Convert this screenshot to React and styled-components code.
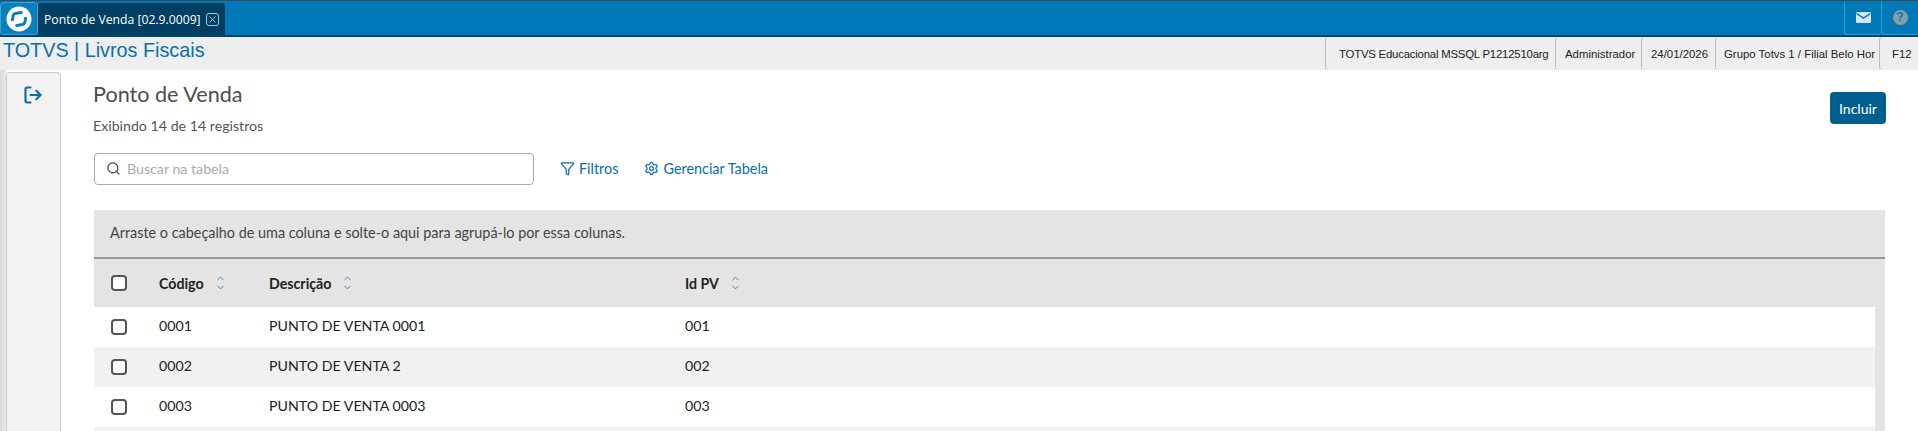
import React from "react";
import styled, { createGlobalStyle } from "styled-components";
import { Search, Filter, Settings, ChevronUp, ChevronDown, LogOut, X } from "lucide-react";

const Global = createGlobalStyle`
  html, body { margin: 0; padding: 0; background: #fff; }
  * { box-sizing: border-box; }
`;
const UI = `"Lato", "Open Sans", sans-serif`;
const Page = styled.div`
  width: 100%; height: 100vh; overflow: hidden; display: flex; flex-direction: column; font-family: ${UI}; background: #fff;
`;
const TopBar = styled.header`
  height: 37px; flex: none; display: flex; align-items: stretch; background: #0079b8;
  border-top: 1px solid #3a4a55; border-bottom: 2px solid #00466e;
`;
const LogoBtn = styled.div`
  width: 38px; margin-top: 1px; display: flex; align-items: center; justify-content: center;
  border: 1px solid #3fa0dc; border-radius: 4px; background: #0a7fbd;
`;
const Tab = styled.div`
  width: 187px; margin-top: 2px; display: flex; align-items: center; gap: 5px; padding-left: 6px; background: #003f63;
  border-radius: 3px 3px 0 0; color: #fff; font: 12.2px "Open Sans", sans-serif;
`;
const CloseBox = styled.span`
  width: 13px; height: 13px; border: 1px solid #b5c4ce; border-radius: 3px; display: flex; align-items: center; justify-content: center; color: #b5c4ce;
`;
const Spacer = styled.div`flex: 1;`;
const TopIcon = styled.div`
  width: 37px; display: flex; align-items: center; justify-content: center;
  border-left: 1px solid #2a9be0; border-bottom: 1px solid #2a9be0; border-radius: 0 0 3px 3px;
`;
const HelpDot = styled.span`
  width: 15px; height: 15px; border-radius: 50%; background: #8a9aa5; color: #0079b8; display: flex; align-items: center; justify-content: center;
  font: bold 12px/15px "Liberation Sans", Arial, sans-serif;
`;
const SubBar = styled.div`
  height: 33px; flex: none; display: flex; align-items: stretch; justify-content: space-between; background: #eee;
`;
const Brand = styled.div`
  padding-left: 3px; font: 19.8px/26px "Liberation Sans", Arial, sans-serif; color: #0a6ea8;
`;
const Status = styled.div`display: flex;`;
const StatusCell = styled.div`
  width: ${p => p.$w}px; padding-left: ${p => p.$pad}px; display: flex; align-items: center; white-space: nowrap; overflow: hidden;
  font: 11.4px "Liberation Sans", Arial, sans-serif; letter-spacing: ${p => p.$ls || 0}px; color: #222;
  border-left: 1px solid #bbb; border-radius: 4px 0 0 4px;
`;
const Body = styled.div`flex: none; height: 361px; display: flex;`;
const Side = styled.aside`
  width: 61px; flex: none; padding-left: 6px; padding-top: 2px;
  background: linear-gradient(90deg, #d8d8d8 0, #e8e8e8 6px, #fff 6px);
`;
const SideInner = styled.div`
  height: 100%; background: #f2f2f2; border: 1px solid #ccc; border-bottom: 0; border-radius: 4px 4px 0 0;
  display: flex; justify-content: center; padding-top: 12px; padding-right: 2px; color: #0a6ea8;
`;
const Main = styled.main`flex: 1; min-width: 0; padding: 0 33px; display: flex; flex-direction: column;`;
const Head = styled.div`flex: none; display: flex; justify-content: space-between; align-items: flex-start;`;
const Title = styled.h1`margin: 10px 0 0 -1px; font-size: 21.6px; line-height: 28px; font-weight: 400; color: #4d4d4d;`;
const Sub = styled.div`margin-top: 9px; margin-left: -1px; font-size: 14.2px; line-height: 18px; color: #555;`;
const Primary = styled.button`
  margin: 22px -1px 0 0; width: 56px; height: 32px; border: 0; border-radius: 4px; background: #005f8f; color: #fff; font: 14px ${UI}; padding: 0;
`;
const Tools = styled.div`flex: none; display: flex; align-items: center; height: 32px; margin-top: 18px;`;
const SearchBox = styled.div`
  width: 440px; height: 32px; margin-right: 26px; padding: 0 0 2px 11px; border: 1px solid #aaa; border-radius: 4px; display: flex; align-items: center; gap: 6px;
  color: #aaa; font-size: 14.2px;
  svg { color: #444; }
`;
const Link = styled.div`
  display: flex; align-items: center; gap: 4px; padding-bottom: 2px; color: #0a6ea8; font-size: 14.4px; margin-right: 26px;
`;
const GroupBar = styled.div`
  flex: none; margin-top: 25px; height: 49px; padding: 0 0 2px 16px; background: #e4e4e4; border-bottom: 2px solid #999; display: flex; align-items: center;
  font-size: 14.4px; color: #444;
`;
const Table = styled.div`flex: none; background: #e4e4e4; padding-right: 10px;`;
const Row = styled.div`
  display: grid; grid-template-columns: 65px 110px 416px 1fr; align-items: center; height: ${p => p.$h}px;
  background: ${p => p.$bg}; font-size: 14.2px; color: #222; font-weight: ${p => (p.$head ? 700 : 400)};
`;
const Check = styled.span`
  display: block; margin-left: 17px; width: 16px; height: 16px; border: 2px solid #555; border-radius: 4px; background: #fff;
`;
const Cell = styled.div`padding-bottom: 3px;`;
const HeadCell = styled.div`display: flex; align-items: center; gap: 11px;`;
const Sort = styled.span`
  display: flex; flex-direction: column; color: #3f7ea6; svg { display: block; margin: -1px 0; }
`;
const SortIcon = () => (
  <Sort><ChevronUp size={11} /><ChevronDown size={11} /></Sort>
);
const Logo = () => (
  <svg width="28" height="28" viewBox="0 0 28 28">
    <circle cx="14" cy="14" r="12.5" fill="#fff" />
    <path d="M7.2 16 L8.2 10.5 Q8.7 8.8 10.4 8.4 L17.5 7.2" stroke="#0a7fbd" strokeWidth="3" fill="none" />
    <path d="M20.8 12 L19.8 17.5 Q19.3 19.2 17.6 19.6 L10.5 20.8" stroke="#0a7fbd" strokeWidth="3" fill="none" />
  </svg>
);
const MailIcon = () => (
  <svg width="15" height="11" viewBox="0 0 15 11">
    <rect width="15" height="11" rx="1.2" fill="#d5e6f0" />
    <path d="M0.5 1.5 L7.5 6.2 L14.5 1.5" stroke="#0079b8" strokeWidth="1.4" fill="none" />
  </svg>
);
const rows = [
  ["0001", "PUNTO DE VENTA 0001", "001"],
  ["0002", "PUNTO DE VENTA 2", "002"],
  ["0003", "PUNTO DE VENTA 0003", "003"],
  ["", "", ""],
];
export default function App() {
  return (
    <Page>
      <Global />
      <TopBar>
        <LogoBtn><Logo /></LogoBtn>
        <Tab>Ponto de Venda [02.9.0009]<CloseBox><X size={11} /></CloseBox></Tab>
        <Spacer />
        <TopIcon><MailIcon /></TopIcon>
        <TopIcon><HelpDot>?</HelpDot></TopIcon>
      </TopBar>
      <SubBar>
        <Brand>TOTVS | Livros Fiscais</Brand>
        <Status>
          <StatusCell $w={230} $pad={13} $ls={-0.22}>TOTVS Educacional MSSQL P1212510arg</StatusCell>
          <StatusCell $w={86} $pad={9}>Administrador</StatusCell>
          <StatusCell $w={74} $pad={9}>24/01/2026</StatusCell>
          <StatusCell $w={164} $pad={8}>Grupo Totvs 1 / Filial Belo Hor</StatusCell>
          <StatusCell $w={39} $pad={12}>F12</StatusCell>
        </Status>
      </SubBar>
      <Body>
        <Side><SideInner><LogOut size={20} strokeWidth={2.6} /></SideInner></Side>
        <Main>
          <Head>
            <div>
              <Title>Ponto de Venda</Title>
              <Sub>Exibindo 14 de 14 registros</Sub>
            </div>
            <Primary>Incluir</Primary>
          </Head>
          <Tools>
            <SearchBox><Search size={15} />Buscar na tabela</SearchBox>
            <Link><Filter size={15} />Filtros</Link>
            <Link><Settings size={15} />Gerenciar Tabela</Link>
          </Tools>
          <GroupBar>Arraste o cabeçalho de uma coluna e solte-o aqui para agrupá-lo por essa colunas.</GroupBar>
          <Table>
            <Row $h={48} $bg="#e4e4e4" $head>
              <Check />
              <HeadCell>Código<SortIcon /></HeadCell>
              <HeadCell>Descrição<SortIcon /></HeadCell>
              <HeadCell>Id PV<SortIcon /></HeadCell>
            </Row>
            {rows.map((r, i) => (
              <Row key={i} $h={40} $bg={i % 2 ? "#f1f1f1" : "#fff"}>
                <Check />
                <Cell>{r[0]}</Cell>
                <Cell>{r[1]}</Cell>
                <Cell>{r[2]}</Cell>
              </Row>
            ))}
          </Table>
        </Main>
      </Body>
    </Page>
  );
}
